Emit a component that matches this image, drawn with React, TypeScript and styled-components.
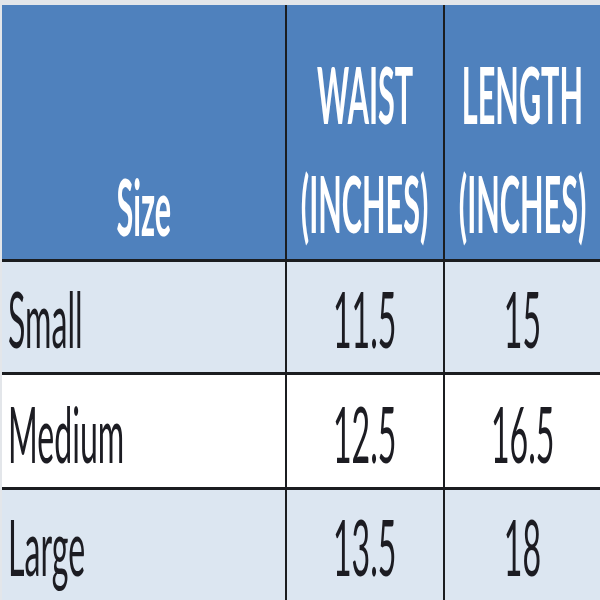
import React from "react";
import styled, { createGlobalStyle } from "styled-components";

const Global = createGlobalStyle`
  html, body { margin: 0; padding: 0; background: #e3e6ea; }
  * { box-sizing: border-box; }
`;

const Page = styled.div`
  width: 600px;
  height: 600px;
  overflow: hidden;
  padding: 5px 0 0 2px;
  background: #e3e6ea;
`;

const Table = styled.div`
  display: flex;
  flex-direction: column;
  width: 598px;
`;

const Row = styled.div<{ $bg: string; $h: number; $last?: boolean }>`
  display: grid;
  grid-template-columns: 285px 158px 1fr;
  height: ${(p) => p.$h}px;
  background: ${(p) => p.$bg};
  border-bottom: ${(p) => (p.$last ? "none" : "3px solid #1b1d20")};
  box-sizing: content-box;
`;

const Cell = styled.div<{ $align: "left" | "center"; $last?: boolean; $pb: number }>`
  display: flex;
  flex-direction: column;
  justify-content: flex-end;
  align-items: ${(p) => (p.$align === "left" ? "flex-start" : "center")};
  padding: 0 0 ${(p) => p.$pb}px ${(p) => (p.$align === "left" ? 6 : 0)}px;
  border-right: ${(p) => (p.$last ? "none" : "2px solid #1b1d20")};
  gap: 79px;
`;

const Text = styled.span<{ $bold?: boolean; $head?: boolean; $origin?: string }>`
  display: inline-block;
  font-family: Lato, "Open Sans", sans-serif;
  font-size: 30px;
  line-height: 30px;
  font-weight: ${(p) => (p.$bold ? 700 : 400)};
  color: ${(p) => (p.$head ? "#ffffff" : "#1c1c22")};
  white-space: nowrap;
  transform: scale(${(p) => (p.$bold ? 1.02 : 1.07)}, 2.6);
  transform-origin: ${(p) => p.$origin ?? "center"} bottom;
`;

const rows = [
  { size: "Small", waist: "11.5", length: "15", bg: "#dce6f1", h: 110 },
  { size: "Medium", waist: "12.5", length: "16.5", bg: "#ffffff", h: 112 },
  { size: "Large", waist: "13.5", length: "18", bg: "#dce6f1", h: 110 },
];

export default function App() {
  return (
    <>
      <Global />
      <Page>
        <Table>
          <Row $bg="#4f81bd" $h={254}>
            <Cell $align="center" $pb={15}>
              <Text $bold $head>Size</Text>
            </Cell>
            <Cell $align="center" $pb={18}>
              <Text $bold $head>WAIST</Text>
              <Text $bold $head>(INCHES)</Text>
            </Cell>
            <Cell $align="center" $pb={18} $last>
              <Text $bold $head>LENGTH</Text>
              <Text $bold $head>(INCHES)</Text>
            </Cell>
          </Row>
          {rows.map((r, i) => (
            <Row key={r.size} $bg={r.bg} $h={r.h} $last={i === rows.length - 1}>
              <Cell $align="left" $pb={16}>
                <Text $origin="left">{r.size}</Text>
              </Cell>
              <Cell $align="center" $pb={16}>
                <Text>{r.waist}</Text>
              </Cell>
              <Cell $align="center" $pb={16} $last>
                <Text>{r.length}</Text>
              </Cell>
            </Row>
          ))}
        </Table>
      </Page>
    </>
  );
}
